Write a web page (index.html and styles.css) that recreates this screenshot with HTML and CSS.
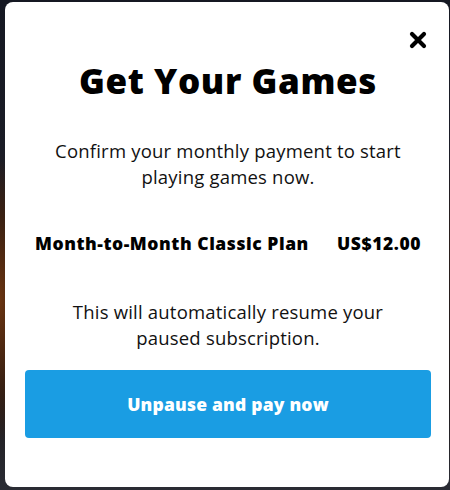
FILE: index.html
```html
<!DOCTYPE html>
<html>
<head>
<meta charset="utf-8">
<link rel="stylesheet" href="styles.css">
</head>
<body>
<div class="backdrop">
  <div class="modal">
    <button class="close" aria-label="Close">
      <svg width="18" height="18" viewBox="0 0 18 18"><path d="M3 3 L15 15 M15 3 L3 15" stroke="#000" stroke-width="4.2" stroke-linecap="round"/></svg>
    </button>
    <h1 class="title">Get Your Games</h1>
    <p class="text">Confirm your monthly payment to start playing games now.</p>
    <div class="plan">
      <span>Month-to-Month Classic Plan</span>
      <span>US$12.00</span>
    </div>
    <p class="text notice">This will automatically resume your paused subscription.</p>
    <button class="pay">Unpause and pay now</button>
  </div>
</div>
</body>
</html>
```
FILE: styles.css
```css
html, body {
  margin: 0;
  padding: 0;
  width: 450px;
  height: 490px;
  overflow: hidden;
}
.backdrop {
  width: 450px;
  height: 490px;
  background:
    radial-gradient(ellipse 30px 140px at 0 300px, #6a3410 0%, #3a2012 60%, transparent 100%),
    linear-gradient(180deg, #151822 0%, #1a1c26 30%, #2a1e1c 50%, #1e1a1c 80%, #2a2c34 100%);
  padding: 2px 1px 3px 5px;
  box-sizing: border-box;
  font-family: "Open Sans", "Liberation Sans", sans-serif;
}
.modal {
  position: relative;
  background: #fff;
  border-radius: 8px;
  height: 485px;
  box-sizing: border-box;
  padding: 0 18px 0 20px;
  display: flex;
  flex-direction: column;
  align-items: center;
  color: #111;
}
.close {
  position: absolute;
  top: 29px;
  right: 22px;
  border: 0;
  background: none;
  padding: 0;
  width: 18px;
  height: 18px;
  display: block;
}
.close svg { display: block; }
.title {
  margin: 57px 0 0;
  font-size: 35px;
  line-height: 44px;
  font-weight: 800;
  color: #000;
  letter-spacing: 0.6px;
}
.text {
  margin: 35px 0 0;
  font-size: 18.5px;
  line-height: 26px;
  letter-spacing: 0.2px;
  text-align: center;
  width: 360px;
  color: #111;
}
.plan {
  margin-top: 41px;
  align-self: stretch;
  padding: 0 10px 0 10px;
  display: flex;
  justify-content: space-between;
  font-weight: 800;
  font-size: 17.5px;
  line-height: 24px;
  letter-spacing: 0.55px;
  color: #000;
}
.notice {
  margin-top: 44px;
}
.pay {
  margin-top: 19px;
  align-self: stretch;
  height: 68px;
  border: 0;
  border-radius: 4px;
  background: #1a9de3;
  color: #fff;
  font-family: "Open Sans", "Liberation Sans", sans-serif;
  font-weight: 800;
  font-size: 17.5px;
  letter-spacing: 0.2px;
}
```
